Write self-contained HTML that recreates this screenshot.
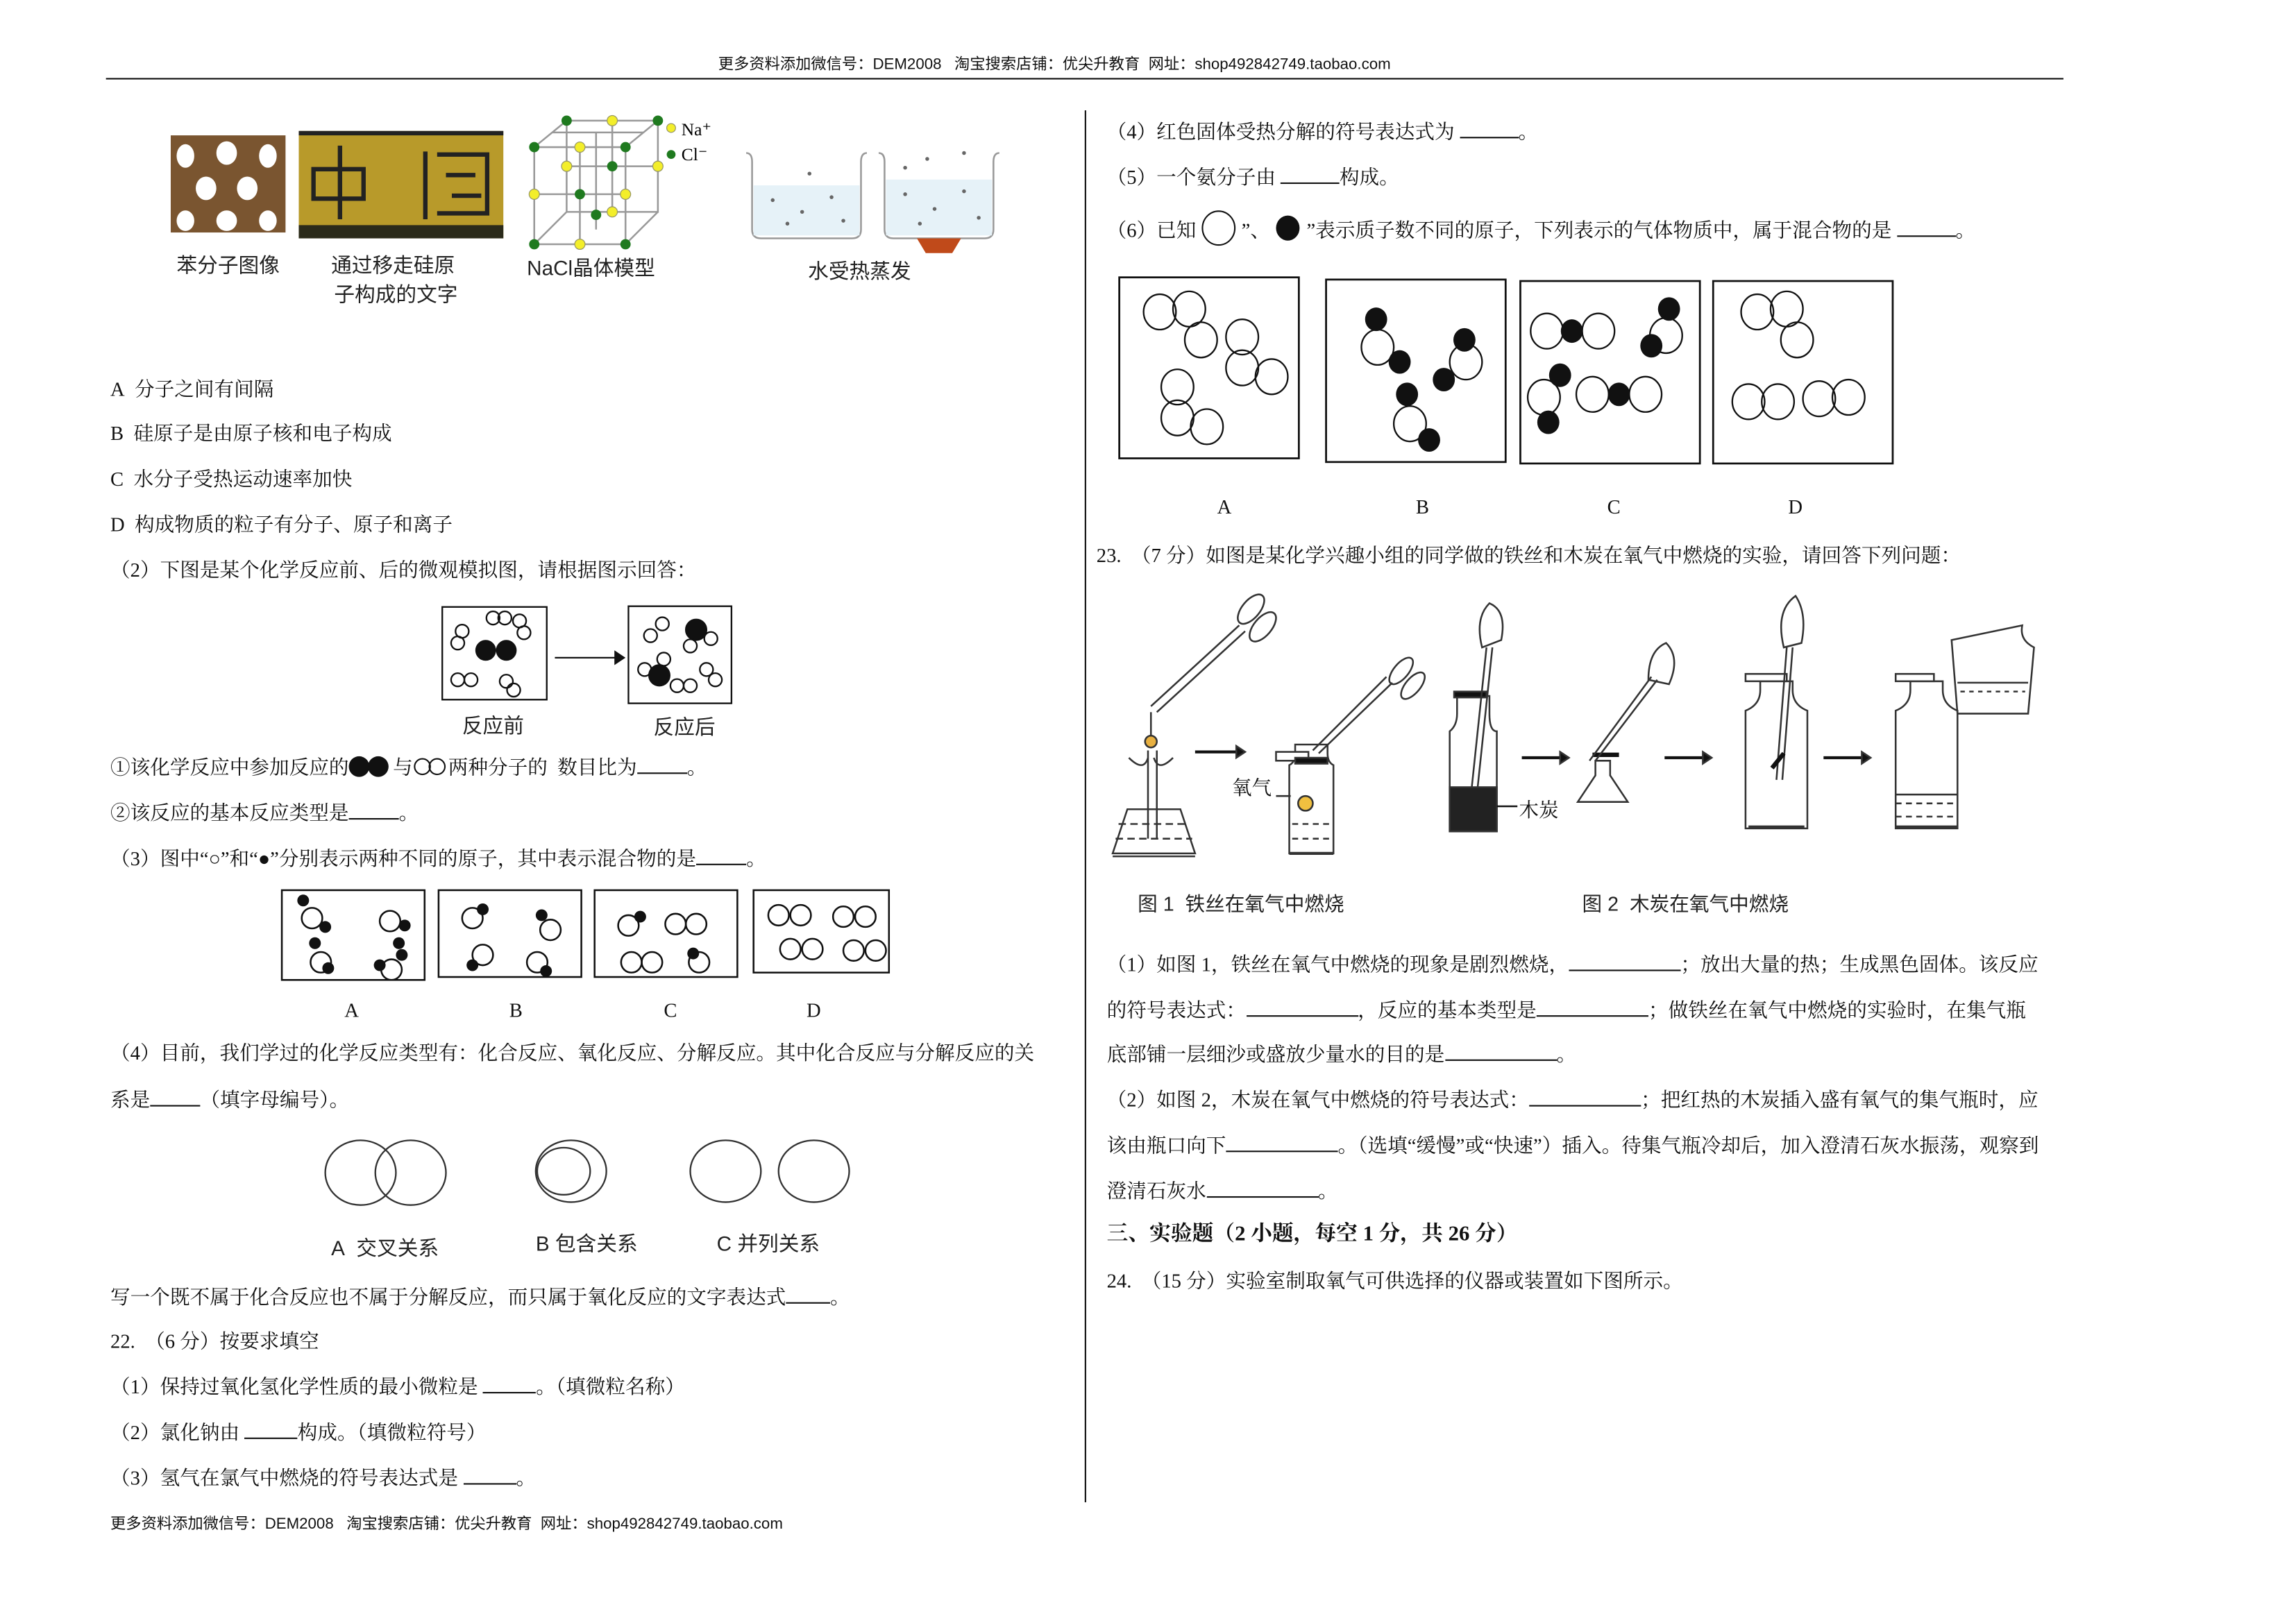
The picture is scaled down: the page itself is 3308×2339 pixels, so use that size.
<!DOCTYPE html>
<html><head><meta charset="utf-8">
<style>
html,body{margin:0;padding:0;background:#fff;}
body{width:3308px;height:2339px;overflow:hidden;position:relative;}
#w{position:absolute;left:0;top:0;width:1560px;height:1103px;transform:scale(2.1205);transform-origin:0 0;}
.t{position:absolute;white-space:nowrap;font-family:"Liberation Serif","Noto Serif CJK SC",serif;font-size:13.5px;line-height:16px;color:#111;}
.s{position:absolute;white-space:nowrap;font-family:"Liberation Sans","Noto Sans CJK SC",sans-serif;font-size:10.5px;line-height:12px;color:#111;}
.c{position:absolute;white-space:nowrap;font-family:"Liberation Sans","Noto Sans CJK SC",sans-serif;font-size:14px;line-height:16px;color:#222;}
.u{display:inline-block;border-bottom:1px solid #111;height:12px;vertical-align:baseline;}
svg{position:absolute;overflow:visible;}
</style></head><body><div id="w">

<div class="s" style="left:488px;top:38px;">更多资料添加微信号：DEM2008&nbsp;&nbsp;&nbsp;淘宝搜索店铺：优尖升教育&nbsp;&nbsp;网址：shop492842749.taobao.com</div>
<div style="position:absolute;left:72px;top:53px;width:1330px;height:1.4px;background:#111;"></div>
<div style="position:absolute;left:737px;top:75px;width:1.2px;height:946px;background:#111;"></div>
<div class="s" style="left:75px;top:1030px;">更多资料添加微信号：DEM2008&nbsp;&nbsp;&nbsp;淘宝搜索店铺：优尖升教育&nbsp;&nbsp;网址：shop492842749.taobao.com</div>

<svg style="left:116px;top:92px" width="78" height="66">
<rect width="78" height="66" fill="#7a5530"/>
<g fill="#fff"><ellipse cx="10" cy="14" rx="6" ry="8"/><ellipse cx="38" cy="12" rx="7" ry="8"/><ellipse cx="66" cy="14" rx="6" ry="8"/><ellipse cx="24" cy="36" rx="7" ry="8"/><ellipse cx="52" cy="36" rx="7" ry="8"/><ellipse cx="10" cy="58" rx="6" ry="7"/><ellipse cx="38" cy="58" rx="7" ry="7"/><ellipse cx="66" cy="58" rx="6" ry="7"/></g></svg>
<svg style="left:203px;top:89px" width="139" height="73">
<rect width="139" height="73" fill="#b89a2a"/><rect width="139" height="3" fill="#222"/><rect y="64" width="139" height="9" fill="#2a2a1a"/>
<g fill="none" stroke="#222" stroke-width="3"><path d="M10 26h34v20H10z M28 10v50"/><path d="M86 14v46 M94 16h34v40H94 M100 30h20 M104 44h20"/></g></svg>
<svg style="left:360px;top:80px" width="130" height="90">
<g stroke="#999" stroke-width="1.2" fill="none"><path d="M25 2h62v62H25z M3 20h62v66H3z M3 20L25 2 M65 20L87 2 M65 86L87 64 M3 86L25 64 M34 20v66 M3 52h62 M25 33h62 M56 2v62 M15 10h62 M45 10v66"/></g>
<g fill="#1f7a1f"><circle cx="25" cy="2" r="3.5"/><circle cx="87" cy="2" r="3.5"/><circle cx="3" cy="86" r="3.5"/><circle cx="65" cy="86" r="3.5"/><circle cx="34" cy="52" r="3.5"/><circle cx="65" cy="20" r="3.5"/><circle cx="3" cy="20" r="3.5"/><circle cx="56" cy="33" r="3.5"/><circle cx="45" cy="66" r="3.5"/></g>
<g fill="#f3ee2a" stroke="#996" stroke-width=".6"><circle cx="56" cy="2" r="3.5"/><circle cx="34" cy="20" r="3.5"/><circle cx="3" cy="52" r="3.5"/><circle cx="65" cy="52" r="3.5"/><circle cx="34" cy="86" r="3.5"/><circle cx="87" cy="33" r="3.5"/><circle cx="25" cy="33" r="3.5"/><circle cx="56" cy="64" r="3.5"/><circle cx="96" cy="7" r="3"/></g>
<circle cx="96" cy="25" r="3" fill="#1f7a1f"/>
<text x="103" y="12" font-family="Liberation Serif" font-size="12">Na⁺</text><text x="103" y="29" font-family="Liberation Serif" font-size="12">Cl⁻</text></svg>
<svg style="left:505px;top:100px" width="175" height="72">
<g fill="none" stroke="#999" stroke-width="1.2"><path d="M2 4q4 0 4 6v46q0 6 6 6h62q6 0 6-6V10q0-6 4-6"/><path d="M92 4q4 0 4 6v46q0 6 6 6h62q6 0 6-6V10q0-6 4-6"/></g>
<rect x="7" y="26" width="72" height="34" fill="#e6f2f8"/><rect x="97" y="22" width="72" height="38" fill="#e6f2f8"/>
<path d="M118 62h30l-6 10h-18z" fill="#c04a1a"/>
<g fill="#666"><circle cx="20" cy="36" r="1.3"/><circle cx="40" cy="44" r="1.3"/><circle cx="60" cy="34" r="1.3"/><circle cx="30" cy="52" r="1.3"/><circle cx="68" cy="50" r="1.3"/><circle cx="110" cy="32" r="1.3"/><circle cx="130" cy="42" r="1.3"/><circle cx="150" cy="30" r="1.3"/><circle cx="120" cy="52" r="1.3"/><circle cx="160" cy="48" r="1.3"/><circle cx="125" cy="8" r="1.3"/><circle cx="150" cy="4" r="1.3"/><circle cx="110" cy="14" r="1.3"/><circle cx="45" cy="18" r="1.3"/></g></svg>
<div class="c" style="left:120px;top:172px;">苯分子图像</div>
<div class="c" style="left:225px;top:172px;">通过移走硅原</div>
<div class="c" style="left:227px;top:192px;">子构成的文字</div>
<div class="c" style="left:358px;top:174px;">NaCl晶体模型</div>
<div class="c" style="left:549px;top:176px;">水受热蒸发</div>

<div class="t" style="left:75px;top:257px;">A&nbsp; 分子之间有间隔</div>
<div class="t" style="left:75px;top:287px;">B&nbsp; 硅原子是由原子核和电子构成</div>
<div class="t" style="left:75px;top:318px;">C&nbsp; 水分子受热运动速率加快</div>
<div class="t" style="left:75px;top:349px;">D&nbsp; 构成物质的粒子有分子、原子和离子</div>
<div class="t" style="left:75px;top:380px;">（2）下图是某个化学反应前、后的微观模拟图，请根据图示回答：</div>

<svg style="left:300px;top:412px" width="200" height="68" fill="none" stroke="#111" stroke-width="1.1">
<rect x=".5" y=".5" width="71" height="63"/><rect x="127" y="0" width="70" height="66"/>
<path d="M77 35h43"/><path d="M118 31l6 4-6 4z" fill="#111"/>
<g><circle cx="14" cy="17" r="4.5"/><circle cx="11" cy="25" r="4.5"/><circle cx="35" cy="8" r="4.5"/><circle cx="43" cy="8" r="4.5"/><circle cx="53" cy="10" r="4.5"/><circle cx="56" cy="18" r="4.5"/><circle cx="11" cy="50" r="4.5"/><circle cx="20" cy="50" r="4.5"/><circle cx="44" cy="51" r="4.5"/><circle cx="49" cy="57" r="4.5"/></g>
<g fill="#111"><circle cx="30" cy="30" r="6.5"/><circle cx="44" cy="30" r="6.5"/><circle cx="173" cy="16" r="7"/><circle cx="148" cy="47" r="7"/></g>
<g><circle cx="142" cy="20" r="4.5"/><circle cx="150" cy="12" r="4.5"/><circle cx="183" cy="22" r="4.5"/><circle cx="169" cy="27" r="4.5"/><circle cx="151" cy="36" r="4.5"/><circle cx="138" cy="43" r="4.5"/><circle cx="160" cy="54" r="4.5"/><circle cx="169" cy="54" r="4.5"/><circle cx="180" cy="43" r="4.5"/><circle cx="186" cy="50" r="4.5"/></g></svg>
<div class="c" style="left:314px;top:485px;">反应前</div>
<div class="c" style="left:444px;top:486px;">反应后</div>

<div class="t" style="left:75px;top:513px;">①该化学反应中参加反应的<svg style="position:relative;display:inline-block;vertical-align:-2px" width="30" height="14"><circle cx="7" cy="7" r="7" fill="#111"/><circle cx="20" cy="7" r="7" fill="#111"/></svg>与<svg style="position:relative;display:inline-block;vertical-align:-1px" width="24" height="12" fill="none" stroke="#111"><circle cx="6" cy="6" r="5.3"/><circle cx="16" cy="6" r="5.3"/></svg>两种分子的&nbsp; 数目比为<span class="u" style="width:34px"></span>。</div>
<div class="t" style="left:75px;top:544px;">②该反应的基本反应类型是<span class="u" style="width:34px"></span>。</div>
<div class="t" style="left:75px;top:575px;">（3）图中“○”和“●”分别表示两种不同的原子，其中表示混合物的是<span class="u" style="width:34px"></span>。</div>

<svg style="left:191px;top:604px" width="415" height="64" fill="none" stroke="#111" stroke-width="1.2">
<rect x=".5" y="1" width="97" height="61"/><rect x="107" y="1" width="97" height="59"/><rect x="213" y="1" width="97" height="59"/><rect x="321" y="1" width="92" height="56"/>
<g><circle cx="21" cy="20" r="7"/><circle cx="74" cy="22" r="7"/><circle cx="27" cy="50" r="7"/><circle cx="75" cy="55" r="7"/><circle cx="130" cy="20" r="7"/><circle cx="183" cy="28" r="7"/><circle cx="137" cy="45" r="7"/><circle cx="174" cy="50" r="7"/><circle cx="236" cy="25" r="7"/><circle cx="268" cy="24" r="7"/><circle cx="282" cy="24" r="7"/><circle cx="238" cy="50" r="7"/><circle cx="252" cy="50" r="7"/><circle cx="284" cy="50" r="7"/><circle cx="338" cy="18" r="7"/><circle cx="353" cy="18" r="7"/><circle cx="382" cy="19" r="7"/><circle cx="397" cy="19" r="7"/><circle cx="346" cy="41" r="7"/><circle cx="361" cy="41" r="7"/><circle cx="389" cy="42" r="7"/><circle cx="404" cy="42" r="7"/></g>
<g fill="#111" stroke="none"><circle cx="15" cy="8" r="4"/><circle cx="30" cy="26" r="4"/><circle cx="23" cy="37" r="4"/><circle cx="32" cy="54" r="4"/><circle cx="84" cy="25" r="4"/><circle cx="80" cy="37" r="4"/><circle cx="82" cy="45" r="4"/><circle cx="67" cy="52" r="4"/><circle cx="137" cy="14" r="4"/><circle cx="177" cy="18" r="4"/><circle cx="130" cy="52" r="4"/><circle cx="180" cy="56" r="4"/><circle cx="244" cy="19" r="4"/><circle cx="280" cy="44" r="4"/></g></svg>
<div class="t" style="left:234px;top:679px;">A</div>
<div class="t" style="left:346px;top:679px;">B</div>
<div class="t" style="left:451px;top:679px;">C</div>
<div class="t" style="left:548px;top:679px;">D</div>

<div class="t" style="left:75px;top:708px;">（4）目前，我们学过的化学反应类型有：化合反应、氧化反应、分解反应。其中化合反应与分解反应的关</div>
<div class="t" style="left:75px;top:739px;">系是<span class="u" style="width:34px"></span>（填字母编号）。</div>

<svg style="left:220px;top:774px" width="360" height="46" fill="none" stroke="#333" stroke-width="1.1">
<ellipse cx="25" cy="23" rx="24" ry="22"/><ellipse cx="59" cy="23" rx="24" ry="22"/>
<ellipse cx="168" cy="22" rx="24" ry="21"/><ellipse cx="163" cy="22" rx="18" ry="16"/>
<ellipse cx="273" cy="22" rx="24" ry="21"/><ellipse cx="333" cy="22" rx="24" ry="21"/></svg>
<div class="c" style="left:225px;top:840px;">A&nbsp; 交叉关系</div>
<div class="c" style="left:364px;top:837px;">B 包含关系</div>
<div class="c" style="left:487px;top:837px;">C 并列关系</div>

<div class="t" style="left:75px;top:873px;">写一个既不属于化合反应也不属于分解反应，而只属于氧化反应的文字表达式<span class="u" style="width:30px"></span>。</div>
<div class="t" style="left:75px;top:904px;">22.&nbsp; （6 分）按要求填空</div>
<div class="t" style="left:75px;top:934px;">（1）保持过氧化氢化学性质的最小微粒是 <span class="u" style="width:36px"></span>。（填微粒名称）</div>
<div class="t" style="left:75px;top:965px;">（2）氯化钠由 <span class="u" style="width:36px"></span>构成。（填微粒符号）</div>
<div class="t" style="left:75px;top:996px;">（3）氢气在氯气中燃烧的符号表达式是 <span class="u" style="width:36px"></span>。</div>

<div class="t" style="left:752px;top:81px;">（4）红色固体受热分解的符号表达式为 <span class="u" style="width:40px"></span>。</div>
<div class="t" style="left:752px;top:112px;">（5）一个氨分子由 <span class="u" style="width:40px"></span>构成。</div>
<div class="t" style="left:752px;top:143px;">（6）已知 <svg style="position:relative;display:inline-block;vertical-align:-6px" width="24" height="24" fill="none" stroke="#111"><ellipse cx="12" cy="12" rx="11" ry="11.5"/></svg> ”、 <svg style="position:relative;display:inline-block;vertical-align:-3px" width="18" height="18"><ellipse cx="9" cy="9" rx="8" ry="8.5" fill="#111"/></svg> ”表示质子数不同的原子，下列表示的气体物质中，属于混合物的是 <span class="u" style="width:40px"></span>。</div>

<svg style="left:760px;top:188px" width="530" height="130" fill="none" stroke="#111" stroke-width="1.3">
<rect x=".5" y=".5" width="122" height="123"/><rect x="141" y="2" width="122" height="124"/><rect x="273" y="3" width="122" height="124"/><rect x="404" y="3" width="122" height="124"/>
<g stroke-width="1.1"><ellipse cx="28" cy="24" rx="11" ry="12"/><ellipse cx="48" cy="22" rx="11" ry="12"/><ellipse cx="56" cy="43" rx="11" ry="12"/><ellipse cx="84" cy="41" rx="11" ry="12"/><ellipse cx="84" cy="62" rx="11" ry="12"/><ellipse cx="104" cy="68" rx="11" ry="12"/><ellipse cx="40" cy="75" rx="11" ry="12"/><ellipse cx="40" cy="96" rx="11" ry="12"/><ellipse cx="60" cy="102" rx="11" ry="12"/>
<ellipse cx="176" cy="48" rx="11" ry="12"/><ellipse cx="236" cy="58" rx="11" ry="12"/><ellipse cx="198" cy="100" rx="11" ry="12"/>
<ellipse cx="291" cy="37" rx="11" ry="12"/><ellipse cx="326" cy="37" rx="11" ry="12"/><ellipse cx="372" cy="40" rx="11" ry="12"/><ellipse cx="289" cy="82" rx="11" ry="12"/><ellipse cx="322" cy="80" rx="11" ry="12"/><ellipse cx="358" cy="80" rx="11" ry="12"/>
<ellipse cx="434" cy="24" rx="11" ry="12"/><ellipse cx="454" cy="22" rx="11" ry="12"/><ellipse cx="461" cy="43" rx="11" ry="12"/><ellipse cx="428" cy="85" rx="11" ry="12"/><ellipse cx="448" cy="85" rx="11" ry="12"/><ellipse cx="476" cy="83" rx="11" ry="12"/><ellipse cx="496" cy="82" rx="11" ry="12"/></g>
<g fill="#111" stroke="none"><ellipse cx="175" cy="29" rx="7.5" ry="8"/><ellipse cx="191" cy="58" rx="7.5" ry="8"/><ellipse cx="235" cy="43" rx="7.5" ry="8"/><ellipse cx="221" cy="70" rx="7.5" ry="8"/><ellipse cx="196" cy="80" rx="7.5" ry="8"/><ellipse cx="211" cy="111" rx="7.5" ry="8"/><ellipse cx="308" cy="37" rx="7.5" ry="8"/><ellipse cx="374" cy="22" rx="7.5" ry="8"/><ellipse cx="362" cy="47" rx="7.5" ry="8"/><ellipse cx="300" cy="67" rx="7.5" ry="8"/><ellipse cx="292" cy="99" rx="7.5" ry="8"/><ellipse cx="340" cy="80" rx="7.5" ry="8"/></g></svg>
<div class="t" style="left:827px;top:337px;">A</div>
<div class="t" style="left:962px;top:337px;">B</div>
<div class="t" style="left:1092px;top:337px;">C</div>
<div class="t" style="left:1215px;top:337px;">D</div>

<div class="t" style="left:745px;top:370px;">23.&nbsp; （7 分）如图是某化学兴趣小组的同学做的铁丝和木炭在氧气中燃烧的实验，请回答下列问题：</div>

<svg style="left:752px;top:400px" width="640" height="195" fill="none" stroke="#333" stroke-width="1.2">
<path d="M30 80L90 25 M34 84L94 29"/><ellipse cx="98" cy="14" rx="6" ry="12" transform="rotate(40 98 14)"/><ellipse cx="106" cy="26" rx="6" ry="12" transform="rotate(40 106 26)"/>
<path d="M30 84v18"/><circle cx="30" cy="104" r="4" fill="#e8b040"/>
<path d="M28 110v60 M34 110v60"/><path d="M14 150h36l10 30H4z"/><path d="M8 160h48 M6 170h52" stroke-dasharray="5 3"/><path d="M4 182h56"/>
<path d="M15 115q10 10 13 0 M45 115q-10 10-13 0"/>
<path d="M60 111h30" stroke="#111" stroke-width="2"/><path d="M88 107l6 4-6 4z" fill="#111"/>
<path d="M124 120v60h30v-60q-4-2-4-8v-6h-22v6q0 6-4 8z"/><rect x="115" y="111" width="22" height="6" fill="#fff"/><rect x="128" y="115" width="22" height="4" fill="#111"/>
<path d="M126 160h26 M126 170h26" stroke-dasharray="4 3"/><path d="M124 180h30" stroke-width="2"/>
<path d="M140 110L190 60 M144 112L194 64"/><ellipse cx="200" cy="56" rx="5" ry="11" transform="rotate(40 200 56)"/><ellipse cx="208" cy="66" rx="5" ry="11" transform="rotate(40 208 66)"/>
<circle cx="135" cy="146" r="5" fill="#f0c040"/><path d="M115 141h10"/>
<path d="M233 165v-68q5-4 5-12v-12h22v12q0 12 5 12v68z"/><rect x="233" y="135" width="32" height="30" fill="#222"/><rect x="236" y="70" width="22" height="4" fill="#111"/>
<path d="M248 135L258 40 M252 135L262 40"/><path d="M255 40q-5-20 5-30q12 5 8 25z"/>
<path d="M265 148h14" stroke="#111"/>
<path d="M282 115h28" stroke="#111" stroke-width="2"/><path d="M308 111l6 4-6 4z" fill="#111"/>
<path d="M320 145l12-18v-10h10v10l12 18z"/><path d="M330 113h18" stroke="#111" stroke-width="3"/><path d="M328 117L370 60 M332 117L374 62"/><path d="M368 62q0-20 12-25q10 10 2 28z"/>
<path d="M379 115h28" stroke="#111" stroke-width="2"/><path d="M405 111l6 4-6 4z" fill="#111"/>
<path d="M434 163v-80q10-4 10-14v-6h22v6q0 10 10 14v80z"/><rect x="434" y="58" width="28" height="5" fill="#fff"/><path d="M436 162h38" stroke-width="2"/><path d="M455 130L462 40 M459 130L466 40"/><path d="M460 40q-6-25 8-35q8 12 4 32z"/><path d="M452 122l8-10" stroke="#111" stroke-width="3"/>
<path d="M487 115h28" stroke="#111" stroke-width="2"/><path d="M513 111l6 4-6 4z" fill="#111"/>
<path d="M536 163v-80q10-4 10-14v-6h22v6q0 10 10 14v80z"/><rect x="536" y="58" width="26" height="5" fill="#fff"/><path d="M536 146h42 M536 155h42" stroke-dasharray="4 3"/><path d="M536 140h42"/><path d="M536 162h42" stroke-width="2"/>
<path d="M574 35l4 50h48l4-45q-10-5-8-15z"/><path d="M578 64h48" /><path d="M580 70h44" stroke-dasharray="3 3"/></svg>
<div class="t" style="left:837px;top:528px;">氧气</div>
<div class="t" style="left:1032px;top:543px;">木炭</div>
<div class="c" style="left:773px;top:607px;font-size:13.5px;">图 1&nbsp; 铁丝在氧气中燃烧</div>
<div class="c" style="left:1075px;top:607px;font-size:13.5px;">图 2&nbsp; 木炭在氧气中燃烧</div>

<div class="t" style="left:752px;top:647px;">（1）如图 1，铁丝在氧气中燃烧的现象是剧烈燃烧，<span class="u" style="width:76px"></span>；放出大量的热；生成黑色固体。该反应</div>
<div class="t" style="left:752px;top:678px;">的符号表达式：<span class="u" style="width:76px"></span>，反应的基本类型是<span class="u" style="width:76px"></span>；做铁丝在氧气中燃烧的实验时，在集气瓶</div>
<div class="t" style="left:752px;top:708px;">底部铺一层细沙或盛放少量水的目的是<span class="u" style="width:76px"></span>。</div>
<div class="t" style="left:752px;top:739px;">（2）如图 2，木炭在氧气中燃烧的符号表达式：<span class="u" style="width:76px"></span>；把红热的木炭插入盛有氧气的集气瓶时，应</div>
<div class="t" style="left:752px;top:770px;">该由瓶口向下<span class="u" style="width:76px"></span>。（选填“缓慢”或“快速”）插入。待集气瓶冷却后，加入澄清石灰水振荡，观察到</div>
<div class="t" style="left:752px;top:801px;">澄清石灰水<span class="u" style="width:76px"></span>。</div>
<div class="t" style="left:752px;top:831px;font-weight:bold;font-size:14.5px;">三、实验题（2 小题，每空 1 分，共 26 分）</div>
<div class="t" style="left:752px;top:863px;">24.&nbsp; （15 分）实验室制取氧气可供选择的仪器或装置如下图所示。</div>

</div></body></html>
